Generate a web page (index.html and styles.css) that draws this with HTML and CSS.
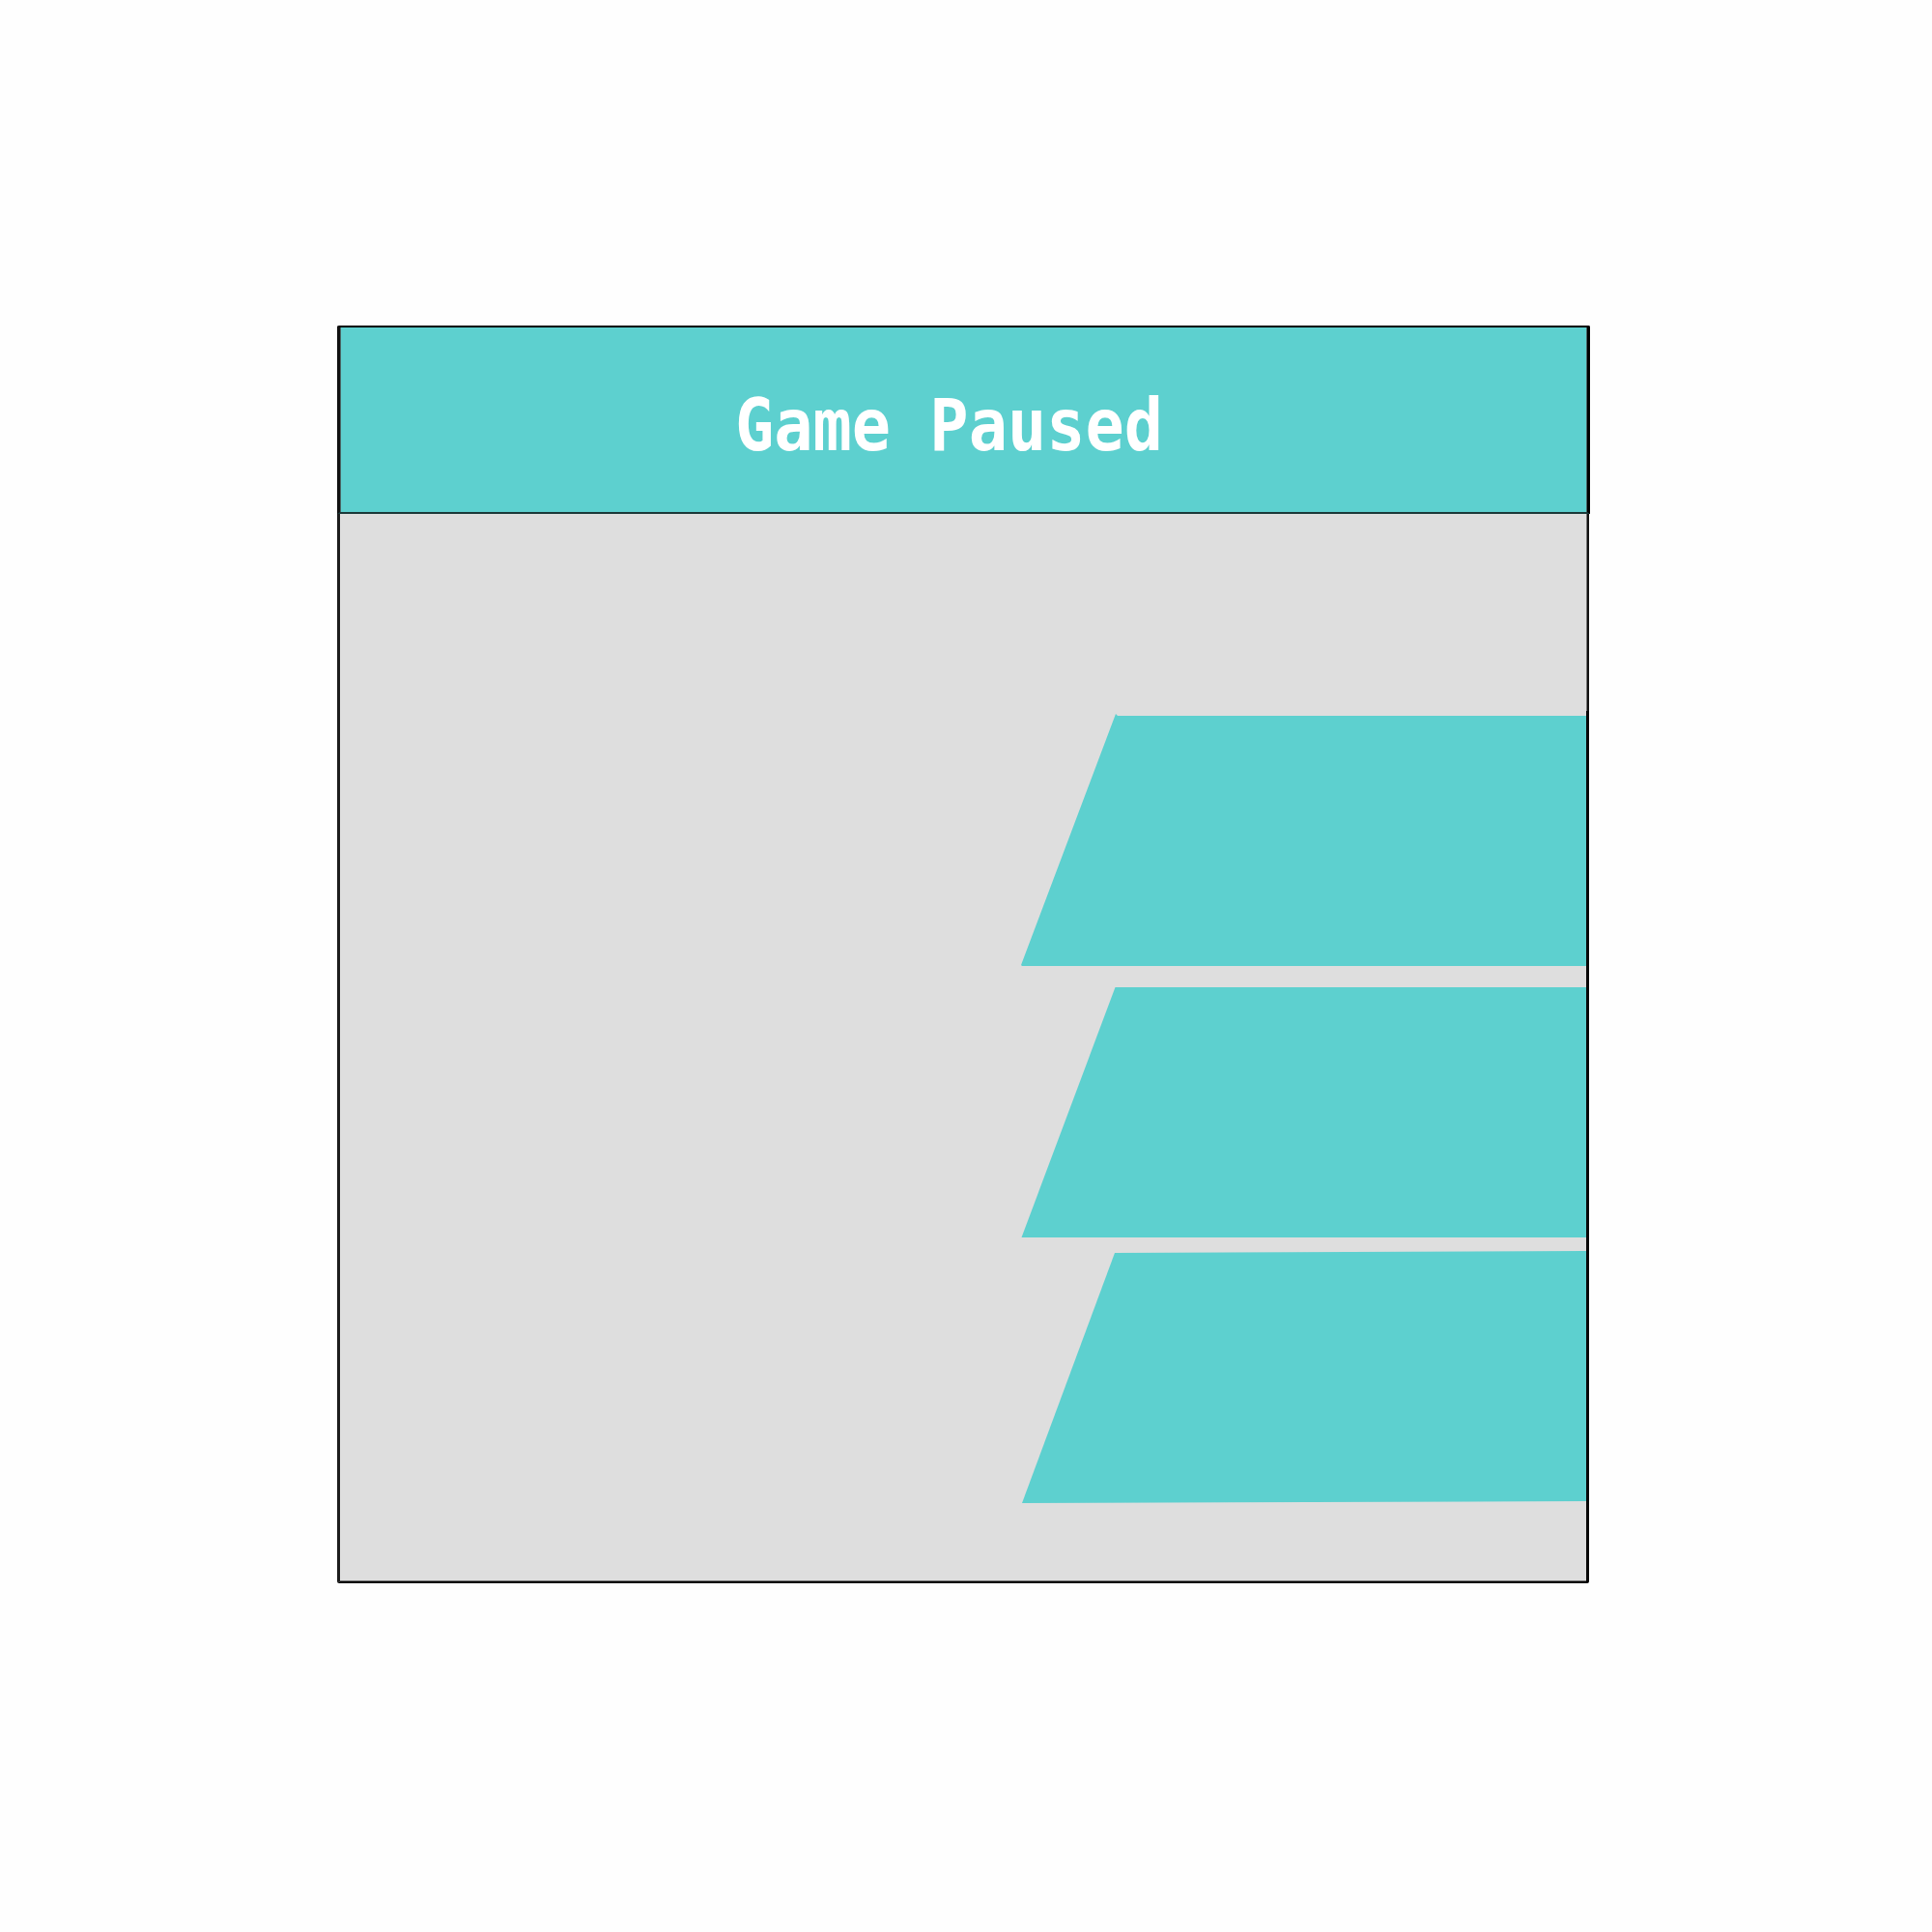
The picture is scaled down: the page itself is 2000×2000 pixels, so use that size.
FILE: index.html
```html
<!DOCTYPE html>
<html lang="en">
<head>
<meta charset="utf-8">
<title>Game Paused</title>
<link rel="stylesheet" href="styles.css">
</head>
<body>
<main class="dialog">
  <header class="header"><h1 class="title">Game Paused</h1></header>
  <section class="content">
    <div class="spacer"></div>
    <nav class="menu">
      <div class="option option-first"></div>
      <div class="option option-second"></div>
      <div class="option option-third"></div>
    </nav>
  </section>
</main>
</body>
</html>
```
FILE: styles.css
```css
* {
  box-sizing: border-box;
}

body {
  margin: 0;
  height: 2000px;
  background: #fefefe;
  overflow: hidden;
}

.dialog {
  width: 1297px;
  margin: 337px 0 0 349px;
}

.header {
  height: 195px;
  padding-top: 62px;
  background: #5dd0cf;
  border: solid #000;
  border-width: 2px 3px;
  border-left-color: #111;
  border-bottom: 2px solid #1b3939;
  border-radius: 2px 2px 0 0;
  box-shadow: inset 1px 0 #4a6665, inset -1px 0 #4a6665;
}

.title {
  margin: 0 0 0 409px;
  font: bold 66.9px/78px "DejaVu Sans Mono", monospace;
  color: #fff;
  white-space: pre;
  transform: scaleY(1.11);
}

.content {
  width: 1296px;
  height: 1107px;
  background: #dedede;
  border-left: 3px solid #1c1c1c;
  border-bottom: 2px solid #000;
  border-radius: 0 0 2px 2px;
  box-shadow: inset 0 -1px #777;
}

.spacer {
  height: 204px;
  border-right: 2px solid #111;
  box-shadow: inset -1px 0 #777;
}

.menu {
  height: 901px;
  display: flex;
  flex-direction: column;
  align-items: flex-end;
  border-right: 3px solid #080808;
}

.option {
  width: 585px;
  background: #5dd0cf;
}

.option-first {
  height: 262px;
  margin-top: 2px;
  clip-path: polygon(98px 1px, 100px 3px, 100% 3px, 100% 100%, 1px 100%, 0 261px);
}

.option-second {
  height: 259px;
  margin-top: 22px;
  clip-path: polygon(97.5px 0, 100% 0, 100% 100%, 0.5px 100%);
}

.option-third {
  height: 261px;
  margin-top: 14px;
  clip-path: polygon(97px 2px, 100% 0, 100% 259px, 1px 100%);
}
```
